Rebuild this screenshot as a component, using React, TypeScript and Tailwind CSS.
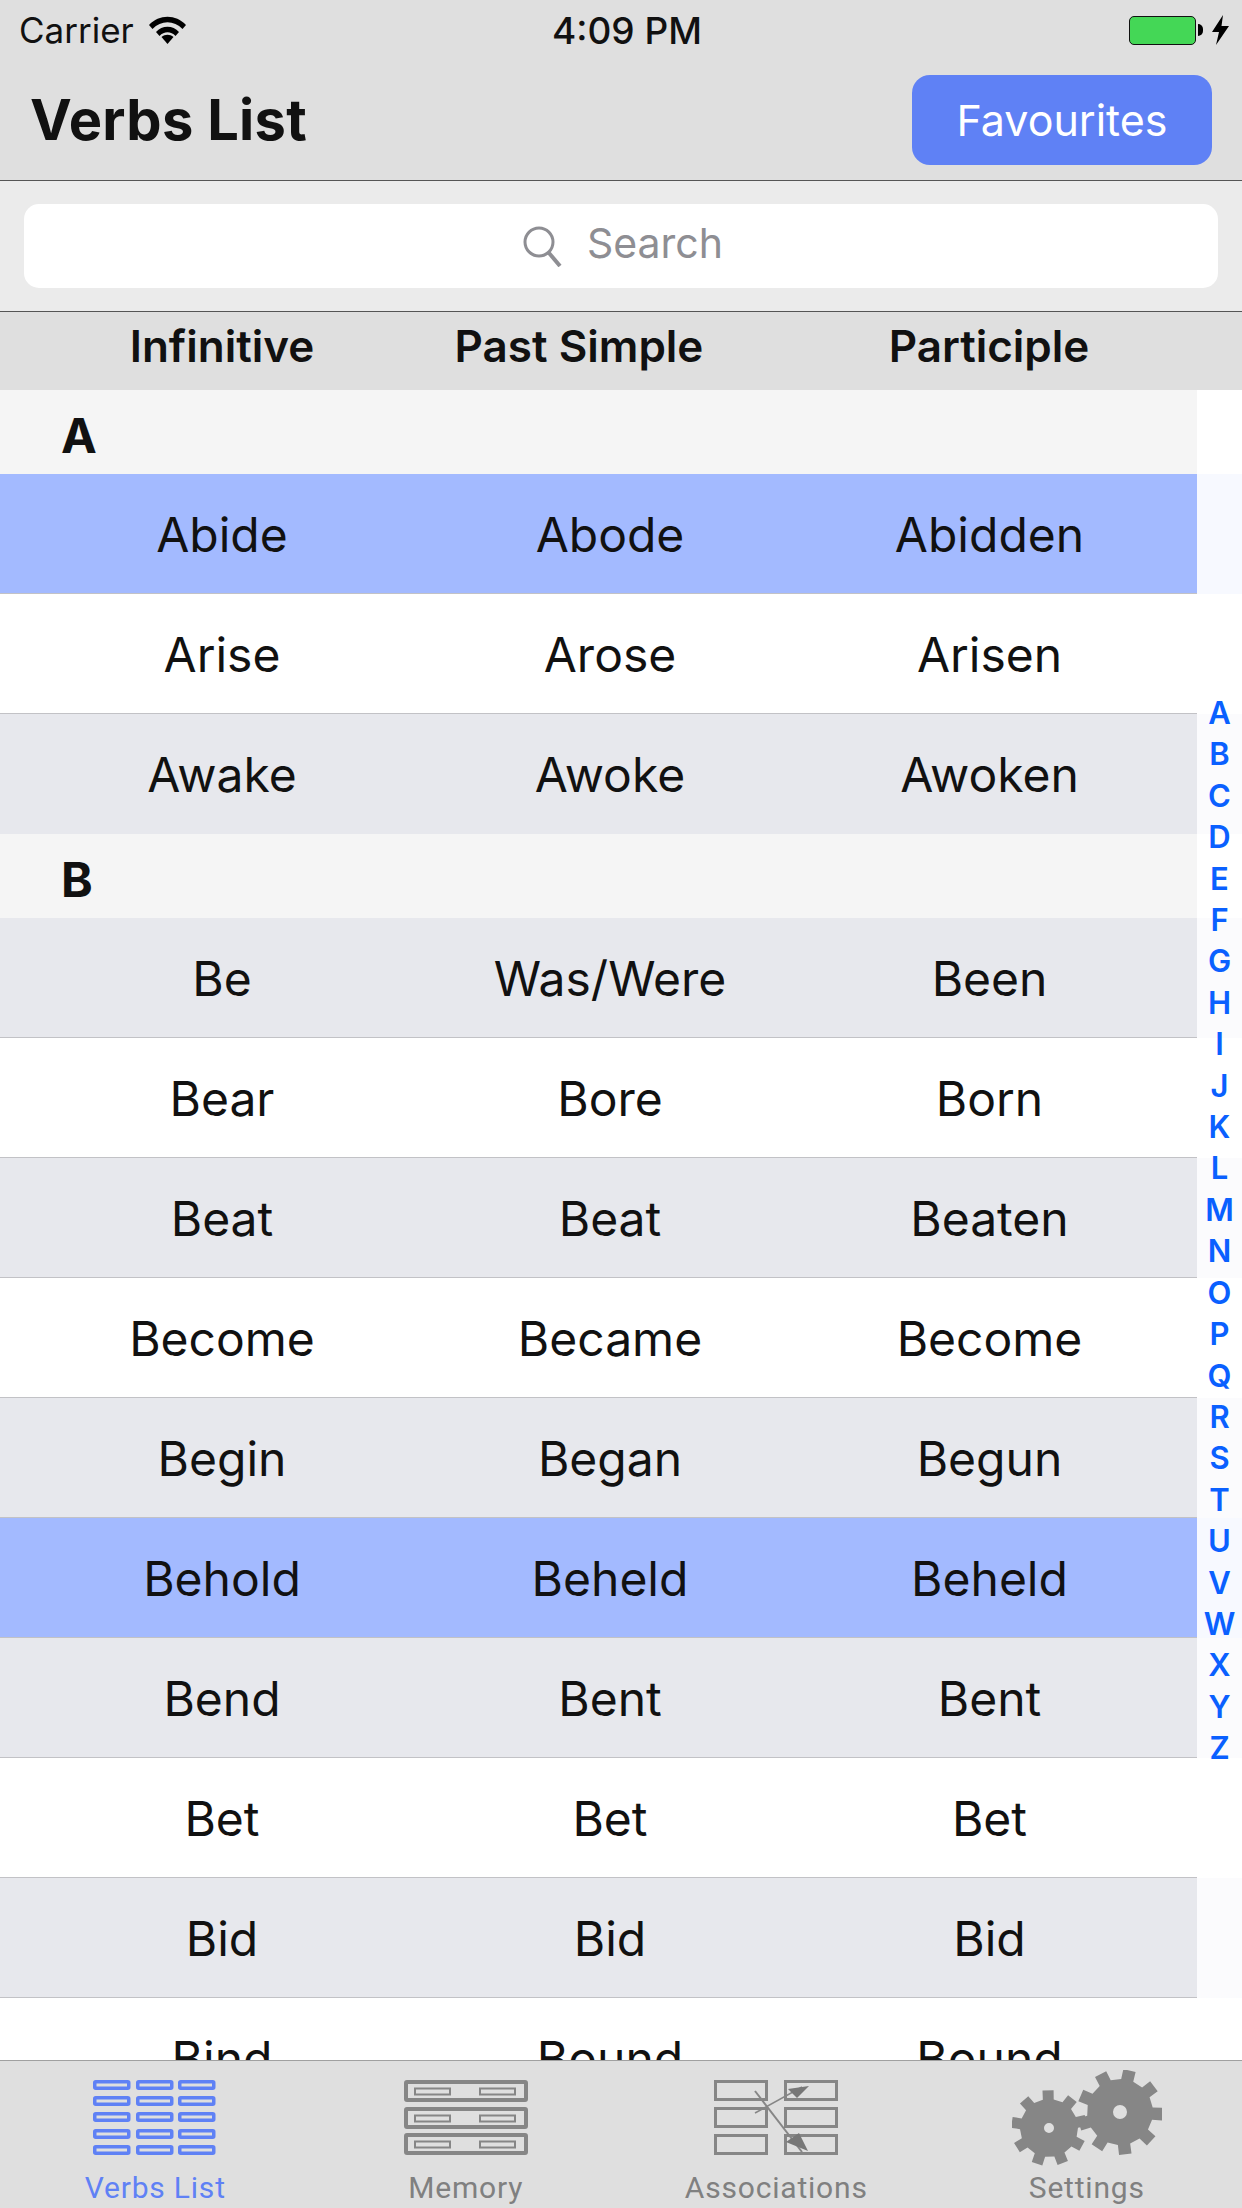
const SECTIONS = [
  {
    letter: "A",
    rows: [
      ["Abide", "Abode", "Abidden", "blue"],
      ["Arise", "Arose", "Arisen", "white"],
      ["Awake", "Awoke", "Awoken", "grey"],
    ],
  },
  {
    letter: "B",
    rows: [
      ["Be", "Was/Were", "Been", "grey"],
      ["Bear", "Bore", "Born", "white"],
      ["Beat", "Beat", "Beaten", "grey"],
      ["Become", "Became", "Become", "white"],
      ["Begin", "Began", "Begun", "grey"],
      ["Behold", "Beheld", "Beheld", "blue"],
      ["Bend", "Bent", "Bent", "grey"],
      ["Bet", "Bet", "Bet", "white"],
      ["Bid", "Bid", "Bid", "grey"],
      ["Bind", "Bound", "Bound", "white"],
    ],
  },
];

const ROW_COLORS: Record<string, string> = {
  blue: "bg-[#a3baff]",
  white: "bg-white",
  grey: "bg-[#e7e8ed]",
};

const STRIPE_COLORS: Record<string, string> = {
  blue: "bg-[#f7f9ff]",
  white: "bg-white",
  grey: "bg-[#fbfbfd]",
};

const LETTERS = "ABCDEFGHIJKLMNOPQRSTUVWXYZ".split("");

function gearPath(cx: number, cy: number, outer: number, inner: number, teeth: number, rot: number) {
  const pts: string[] = [];
  const step = (Math.PI * 2) / teeth;
  for (let i = 0; i < teeth; i++) {
    const a = rot + i * step;
    const offs = [
      [-0.27, inner],
      [-0.21, outer],
      [0.21, outer],
      [0.27, inner],
    ];
    for (const [o, r] of offs) {
      const t = a + o * step;
      pts.push(`${(cx + Math.cos(t) * r).toFixed(2)} ${(cy + Math.sin(t) * r).toFixed(2)}`);
    }
  }
  return `M${pts.join("L")}Z`;
}

function VerbsIcon() {
  const xs = [0, 43, 85];
  const ys = [0, 16, 32, 49, 65];
  return (
    <svg width="124" height="75" viewBox="0 0 124 75">
      {ys.map((y) =>
        xs.map((x) => (
          <rect key={`${x}-${y}`} x={x + 1.75} y={y + 1.75} width="34" height="6.5" rx="1" fill="none" stroke="#5f81f5" strokeWidth="3.5" />
        )),
      )}
    </svg>
  );
}

function MemoryIcon() {
  return (
    <svg width="124" height="75" viewBox="0 0 124 75">
      {[0, 27, 53].map((y) => (
        <g key={y} fill="none" stroke="#868686">
          <rect x="2" y={y + 2} width="120" height="18" rx="1" strokeWidth="4" />
          <rect x="11" y={y + 8.5} width="35" height="6" strokeWidth="2" />
          <rect x="76" y={y + 8.5} width="35" height="6" strokeWidth="2" />
        </g>
      ))}
    </svg>
  );
}

function AssociationsIcon() {
  return (
    <svg width="124" height="75" viewBox="0 0 124 75">
      <g fill="none" stroke="#868686" strokeWidth="3">
        {[0, 27, 54].map((y) => (
          <g key={y}>
            <rect x="1.5" y={y + 1.5} width="51" height="18" />
            <rect x="71.5" y={y + 1.5} width="51" height="18" />
          </g>
        ))}
      </g>
      <path d="M41 11L88 72" stroke="#868686" strokeWidth="2" fill="none" />
      <path d="M41 33L88 7" stroke="#868686" strokeWidth="1.5" fill="none" />
      <path d="M95 6L74 9L83 18Z" fill="#777" />
      <path d="M94 71L72 62L85 53Z" fill="#777" />
    </svg>
  );
}

function SettingsIcon() {
  return (
    <svg width="150" height="96" viewBox="0 0 150 96">
      <path
        fillRule="evenodd"
        fill="#868686"
        d={`${gearPath(37, 58, 38, 29, 9, -0.2)}M42 58a5 5 0 1 0 -10 0a5 5 0 1 0 10 0Z`}
      />
      <path
        fillRule="evenodd"
        fill="#868686"
        d={`${gearPath(108, 42, 43, 33, 9, 0.05)}M115 42a7 7 0 1 0 -14 0a7 7 0 1 0 14 0Z`}
      />
    </svg>
  );
}

const TABS = [
  { label: "Verbs List", active: true, icon: <VerbsIcon /> },
  { label: "Memory", active: false, icon: <MemoryIcon /> },
  { label: "Associations", active: false, icon: <AssociationsIcon /> },
  { label: "Settings", active: false, icon: <SettingsIcon /> },
];

export default function App() {
  return (
    <div className="relative h-[2208px] w-[1242px] flex flex-col overflow-hidden bg-white text-[#111] font-['Inter','Liberation_Sans',sans-serif]">
      {/* status bar */}
      <div className="h-[60px] shrink-0 bg-[#dfdfdf] grid grid-cols-3 items-center pl-[19px] pr-[13px]">
        <div className="flex items-center gap-[15px] text-[35px] leading-none">
          <span>Carrier</span>
          <svg width="37" height="28" viewBox="0 0 37 28">
            <path d="M0 9C10-2 27-2 37 9L33.5 13C25 4 12 4 3.500 13Z" fill="#000" />
            <path d="M7 16C13 9 24 9 30 16L26.500 20C22 15 15 15 10.500 20Z" fill="#000" />
            <path d="M12.500 21C16 18 21 18 24.500 21L18.500 28Z" fill="#000" />
          </svg>
        </div>
        <div className="pl-[6px] text-center text-[37px] leading-none font-medium">4:09 PM</div>
        <div className="flex items-center justify-end gap-[9px]">
          <div className="flex items-center">
            <div className="h-[29px] w-[67px] rounded-[5px] border border-[#111] bg-[#44d756]" />
            <div className="ml-[2px] h-[12px] w-[5px] rounded-r-full bg-black" />
          </div>
          <svg width="17" height="30" viewBox="0 0 17 30">
            <path d="M11 0L0 17H7L4 30L17 11H9.500Z" fill="#000" />
          </svg>
        </div>
      </div>

      {/* nav bar */}
      <div className="h-[121px] shrink-0 bg-[#dfdfdf] border-b border-[#555] flex items-start justify-between px-[30px] pt-[15px]">
        <h1 className="mt-[11px] text-[56px] leading-[68px] font-bold tracking-[0.3px]">Verbs List</h1>
        <button className="h-[90px] w-[300px] rounded-[18px] bg-[#5f81f5] text-white text-[43px]">Favourites</button>
      </div>

      {/* search */}
      <div className="h-[131px] shrink-0 bg-[#ebebeb] border-b border-[#555] px-[24px] pt-[23px]">
        <div className="h-[84px] rounded-[15px] bg-white flex items-center justify-center gap-[22px] text-[#8e8e93] text-[41px]">
          <svg width="42" height="42" viewBox="0 0 42 42" fill="none" stroke="#8e8e93">
            <circle cx="16" cy="17" r="14" strokeWidth="3" />
            <path d="M26 28L37 41" strokeWidth="4" />
          </svg>
          <span className="mr-[-4px] mb-[5px]">Search</span>
        </div>
      </div>

      {/* column headers */}
      <div className="h-[78px] shrink-0 bg-[#dfdfdf] grid grid-cols-[444px_270px_528px] items-center pb-[11px] text-center text-[44px] leading-[56px] font-semibold">
        <div>Infinitive</div>
        <div>Past Simple</div>
        <div className="pl-[22px]">Participle</div>
      </div>

      {/* table */}
      <div className="flex-1 min-h-0 overflow-hidden">
        {SECTIONS.map((section) => (
          <div key={section.letter}>
            <div className="h-[84px] flex">
              <div className="w-[1197px] bg-[#f5f5f5] pl-[61px] pt-[8px] flex items-center text-[48px] font-bold">{section.letter}</div>
            </div>
            {section.rows.map((row, i) => (
              <div key={row[0]} className="flex h-[120px]">
                <div
                  className={`w-[1197px] grid grid-cols-[444px_332px_421px] items-center pt-[2px] text-center text-[48px] ${ROW_COLORS[row[3]]} ${
                    i < section.rows.length - 1 ? "border-b border-[#c2c2c6]" : ""
                  }`}
                >
                  <div>{row[0]}</div>
                  <div>{row[1]}</div>
                  <div className="pl-[6px]">{row[2]}</div>
                </div>
                <div className={`flex-1 ${STRIPE_COLORS[row[3]]}`} />
              </div>
            ))}
          </div>
        ))}
      </div>

      {/* section index */}
      <div className="absolute right-0 top-[692px] w-[45px] flex flex-col items-center text-[#0a60ff] text-[31px] font-semibold leading-[41.4px]">
        {LETTERS.map((l) => (
          <div key={l}>{l}</div>
        ))}
      </div>

      {/* tab bar */}
      <div className="h-[148px] shrink-0 bg-[#dfdfdf] border-t border-[#a0a0a0] grid grid-cols-4">
        {TABS.map((tab) => (
          <div key={tab.label} className="flex flex-col items-center">
            <div className="h-[113px] flex items-center">{tab.icon}</div>
            <div className={`text-[30px] leading-[28px] font-['Roboto',sans-serif] tracking-[0.8px] ${tab.active ? "text-[#5f81f5]" : "text-[#808080]"}`}>
              {tab.label}
            </div>
          </div>
        ))}
      </div>
    </div>
  );
}
